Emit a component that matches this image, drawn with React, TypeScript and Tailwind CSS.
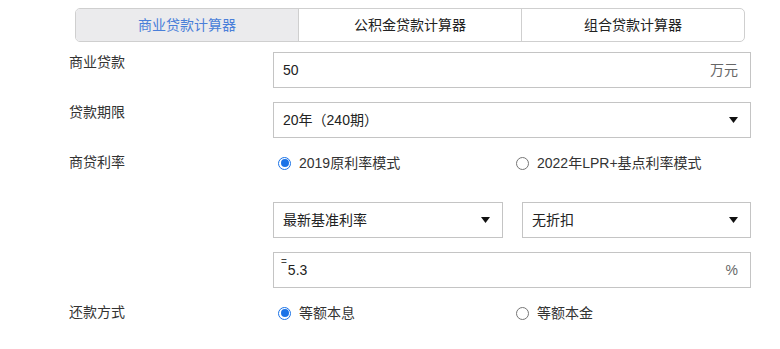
const FONT = '"Liberation Sans", "Noto Sans CJK SC", sans-serif'

const tabs = ['商业贷款计算器', '公积金贷款计算器', '组合贷款计算器']

function Arrow() {
  return (
    <svg width="9" height="6" viewBox="0 0 9 6" className="shrink-0">
      <path d="M0 0h9L4.5 6z" fill="#111" />
    </svg>
  )
}

function Radio({ checked, label }: { checked?: boolean; label: string }) {
  return (
    <label className="flex h-[22px] items-center gap-[8px] text-[14px] text-[#333]">
      {checked ? (
        <span className="flex h-[13px] w-[13px] items-center justify-center rounded-full border border-[#1a73e8] bg-white">
          <span className="h-[8px] w-[8px] rounded-full bg-[#1a73e8]" />
        </span>
      ) : (
        <span className="h-[13px] w-[13px] rounded-full border border-[#767676] bg-white" />
      )}
      <span>{label}</span>
    </label>
  )
}

function Row({ label, children }: { label?: string; children: React.ReactNode }) {
  return (
    <div className="flex h-[36px] items-start">
      <div className="w-[204px] shrink-0 text-[14px] leading-[20px] text-[#333]">{label}</div>
      <div className="w-[478px]">{children}</div>
    </div>
  )
}

function Box({ children }: { children: React.ReactNode }) {
  return (
    <div className="flex h-[36px] items-center justify-between border border-[#c4c4c4] bg-white pl-[9px] pr-[12px] text-[14px] text-[#222]">
      {children}
    </div>
  )
}

export default function App() {
  return (
    <div className="h-[349px] w-[780px] overflow-hidden bg-white" style={{ fontFamily: FONT }}>
      <div className="ml-[75px] mt-[8px] flex h-[34px] w-[670px] overflow-hidden rounded-[5px] border border-[#cfcfcf]">
        {tabs.map((t, i) => (
          <div
            key={t}
            className={
              i === 0
                ? 'flex flex-1 items-center justify-center bg-[#ebebed] text-[14px] text-[#4a7fd9]'
                : 'flex flex-1 items-center justify-center border-l border-[#cfcfcf] text-[14px] text-[#222]'
            }
          >
            {t}
          </div>
        ))}
      </div>

      <div className="ml-[69px] mt-[10px] flex flex-col gap-[14px]">
        <Row label="商业贷款">
          <Box>
            <span>50</span>
            <span className="text-[#666]">万元</span>
          </Box>
        </Row>
        <Row label="贷款期限">
          <Box>
            <span>20年（240期）</span>
            <Arrow />
          </Box>
        </Row>
        <Row label="商贷利率">
          <div className="flex pl-[5px]">
            <div className="w-[238px]">
              <Radio checked label="2019原利率模式" />
            </div>
            <Radio label="2022年LPR+基点利率模式" />
          </div>
        </Row>
        <Row>
          <div className="flex gap-[19px]">
            <div className="w-[230px]">
              <Box>
                <span>最新基准利率</span>
                <Arrow />
              </Box>
            </div>
            <div className="flex-1">
              <Box>
                <span>无折扣</span>
                <Arrow />
              </Box>
            </div>
          </div>
        </Row>
        <Row>
          <div className="flex h-[36px] items-center justify-between border border-[#c4c4c4] bg-white pl-[7px] pr-[12px] text-[14px] text-[#222]">
            <span className="flex items-start">
              <span className="mr-[1px] -mt-[3px] text-[10px] leading-none text-[#444]">=</span>
              <span>5.3</span>
            </span>
            <span className="text-[#666]">%</span>
          </div>
        </Row>
        <Row label="还款方式">
          <div className="flex pl-[5px]">
            <div className="w-[238px]">
              <Radio checked label="等额本息" />
            </div>
            <Radio label="等额本金" />
          </div>
        </Row>
      </div>
    </div>
  )
}
